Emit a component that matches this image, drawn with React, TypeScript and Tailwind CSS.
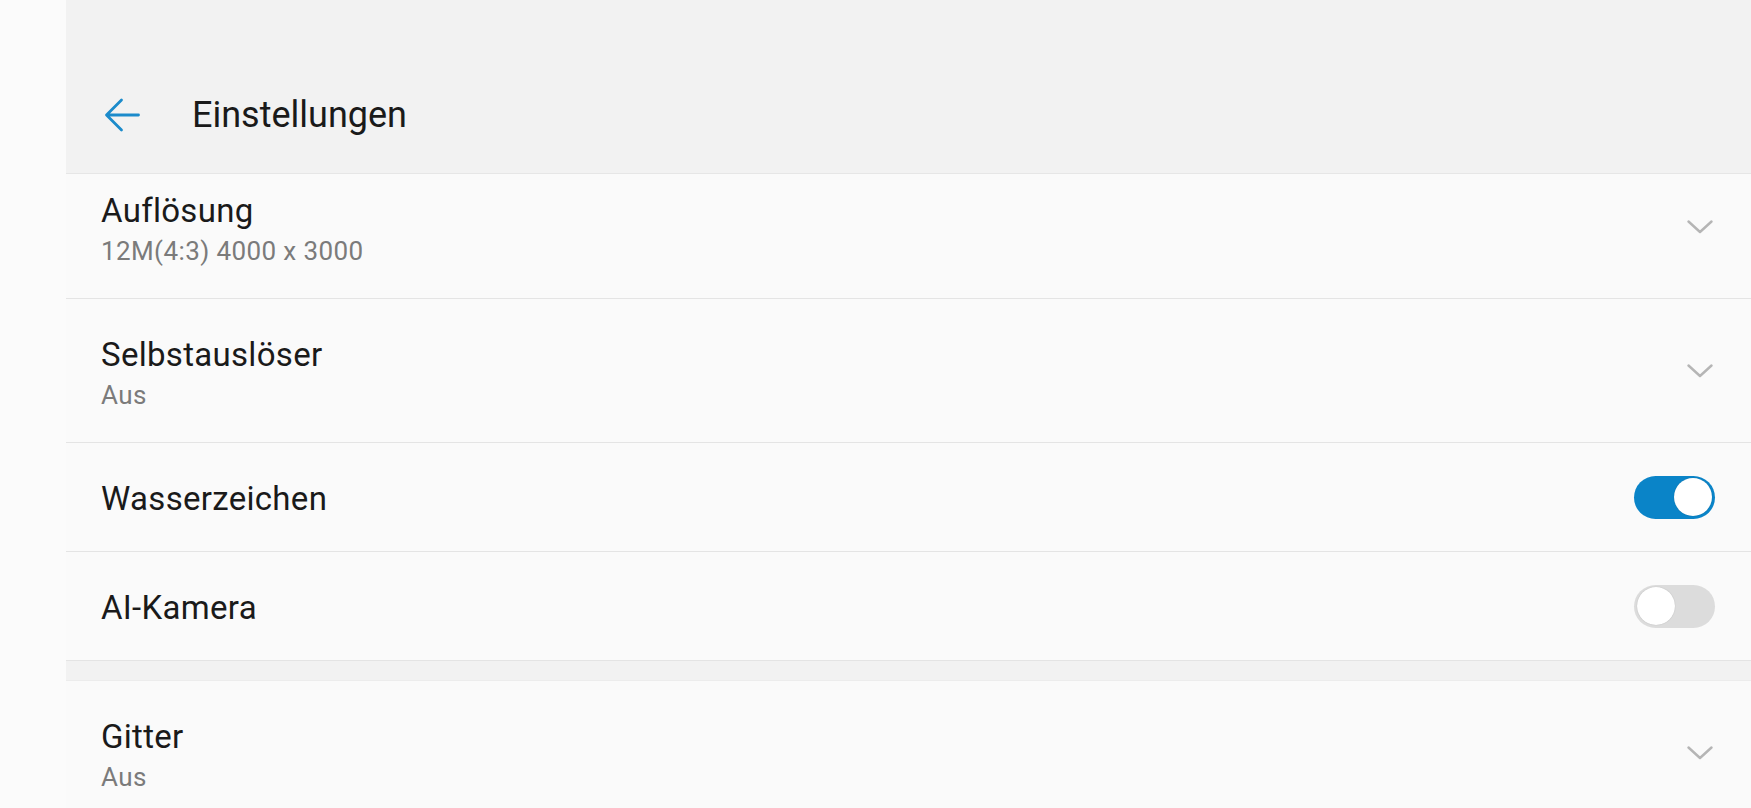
import React from 'react';

const font = { fontFamily: 'Roboto, "Noto Sans", sans-serif' };

function Chevron() {
  return (
    <svg width="26" height="14" viewBox="0 0 26 14" fill="none" className="shrink-0">
      <path d="M1.5 1.5 L13 12 L24.5 1.5" stroke="#b5b5b5" strokeWidth="2.4" strokeLinecap="round" strokeLinejoin="round" />
    </svg>
  );
}

function Toggle({ on }: { on: boolean }) {
  return (
    <div
      className={`w-[81px] h-[43px] rounded-full flex items-center px-[3px] shrink-0 ${
        on ? 'bg-[#0a84c8] justify-end' : 'bg-[#dcdcdc] justify-start'
      }`}
    >
      <div className="w-[38px] h-[38px] rounded-full bg-white shadow-[0_0_1px_rgba(0,0,0,0.25)]" />
    </div>
  );
}

function SelectRow({ title, value, className = '' }: { title: string; value: string; className?: string }) {
  return (
    <div className={`h-[144px] flex items-center justify-between pl-[35px] pr-[38px] border-b border-[#e4e4e4] ${className}`}>
      <div className="flex flex-col">
        <span className="pt-[4px] text-[33px] leading-[40px] tracking-[0.3px] text-[#1a1a1a]">{title}</span>
        <span className="text-[26px] leading-[32px] tracking-[0.4px] mt-[4px] text-[#7b7b7b]">{value}</span>
      </div>
      <Chevron />
    </div>
  );
}

function SwitchRow({ title, on }: { title: string; on: boolean }) {
  return (
    <div className="h-[109px] flex items-center justify-between pl-[35px] pr-[36px] border-b border-[#e4e4e4]">
      <span className="pt-[4px] text-[33px] leading-[40px] tracking-[0.3px] text-[#1a1a1a]">{title}</span>
      <Toggle on={on} />
    </div>
  );
}

export default function App() {
  return (
    <div className="w-[1751px] h-[808px] overflow-hidden flex bg-[#fafafa]" style={font}>
      <div className="w-[66px] shrink-0 bg-[#fbfbfb]" />
      <div className="flex-1 flex flex-col min-w-0">
        <div className="h-[174px] shrink-0 bg-[#f2f2f2] border-b border-[#e6e6e6] pt-[95px] relative z-10">
          <div className="h-[40px] flex items-center">
            <div className="w-[40px] ml-[38px] flex items-center">
              <svg width="36" height="34" viewBox="0 0 36 34" fill="none">
                <path d="M34.5 17 H3 M17.5 2 L2.5 17 L17.5 32" stroke="#1c8bcb" strokeWidth="2.8" strokeLinecap="round" strokeLinejoin="round" />
              </svg>
            </div>
            <span className="ml-[48px] text-[36px] leading-[40px] text-[#1a1a1a]">Einstellungen</span>
          </div>
        </div>
        <div className="flex-1 overflow-hidden">
          <SelectRow title="Auflösung" value="12M(4:3) 4000 x 3000" className="-mt-[19px]" />
          <SelectRow title="Selbstauslöser" value="Aus" />
          <SwitchRow title="Wasserzeichen" on={true} />
          <SwitchRow title="AI-Kamera" on={false} />
          <div className="h-[20px] bg-[#f2f2f2] border-b border-[#ececec]" />
          <SelectRow title="Gitter" value="Aus" />
        </div>
      </div>
    </div>
  );
}
